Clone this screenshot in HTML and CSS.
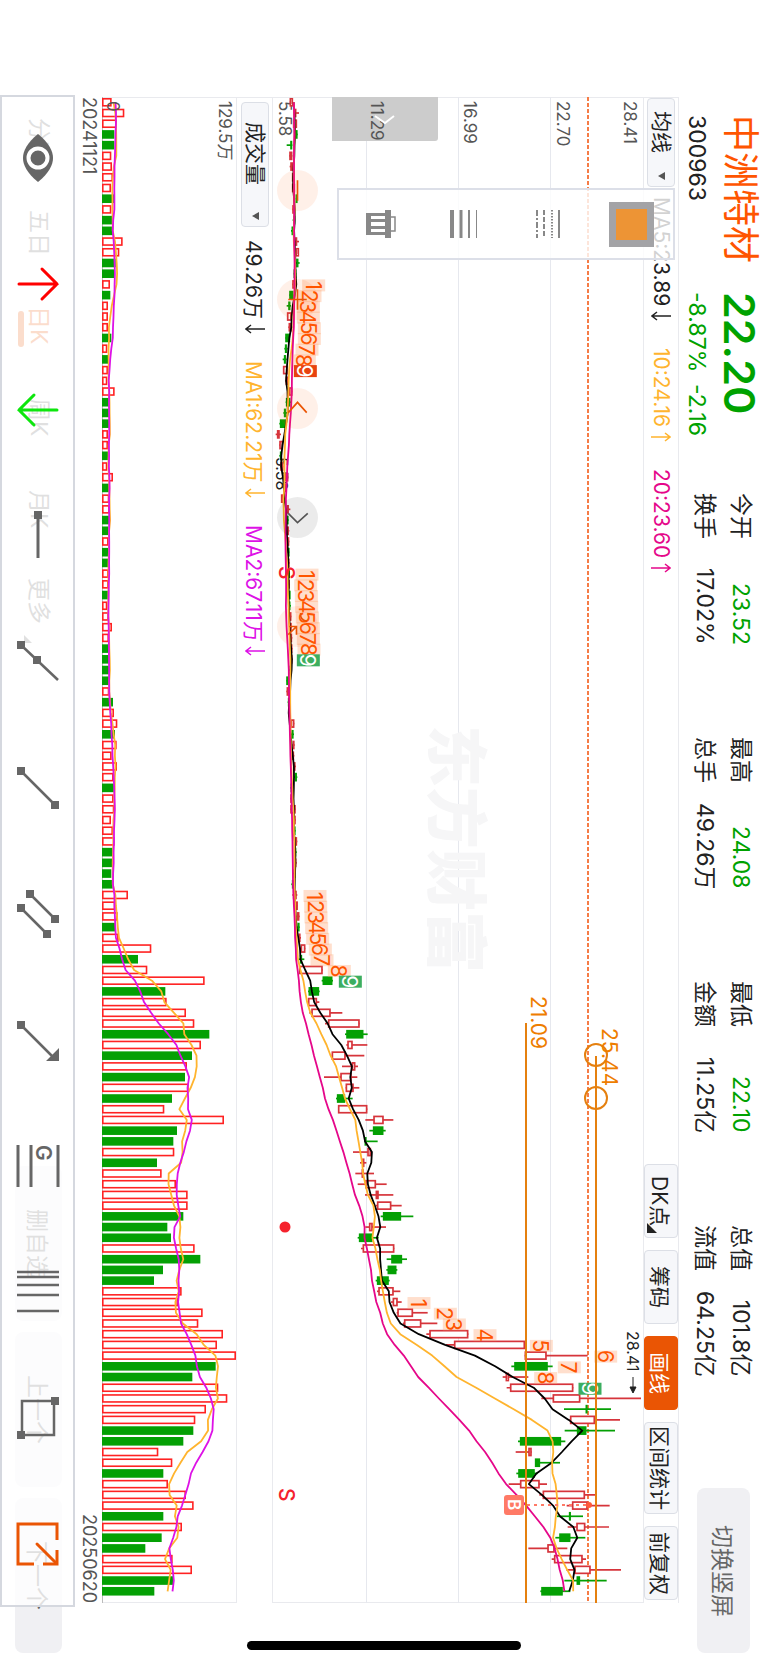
FILE: index.html
```html
<!DOCTYPE html>
<html lang="zh-CN">
<head>
  <meta charset="UTF-8">
  <meta name="viewport" content="width=device-width, initial-scale=1">
  <title>中洲特材 300963</title>
  <link rel="stylesheet" href="styles.css">
</head>
<body>
  <header class="header">
    <div class="quote">
      <h1 class="quote-name">中洲特材</h1>
      <strong class="quote-price">22.20</strong>
      <span class="quote-code">300963</span>
      <span class="quote-change"><span>-8.87%</span><span>-2.16</span></span>
    </div>
    <dl class="stats">
      <div><dt>今开</dt><dd class="down">23.52</dd></div>
      <div><dt>换手</dt><dd>17.02%</dd></div>
      <div><dt>最高</dt><dd class="down">24.08</dd></div>
      <div><dt>总手</dt><dd>49.26万</dd></div>
      <div><dt>最低</dt><dd class="down">22.10</dd></div>
      <div><dt>金额</dt><dd>11.25亿</dd></div>
      <div><dt>总值</dt><dd>101.8亿</dd></div>
      <div><dt>流值</dt><dd>64.25亿</dd></div>
    </dl>
    <button class="gray-btn switch-btn">切换竖屏</button>
  </header>

  <main class="main">
    <div class="bar bar-top">
      <div class="picker">
        <select aria-label="主图指标"><option>均线</option></select>
      </div>
      <div class="legend">
        <span>MA5:23.89<svg class="arr" viewBox="0 0 20 10"><path d="M20 5H1M6 1L1 5l5 4"/></svg></span>
        <span class="c-ma10">10:24.16<svg class="arr" viewBox="0 0 20 10"><path d="M0 5h19M14 1l5 4-5 4"/></svg></span>
        <span class="c-ma20">20:23.60<svg class="arr" viewBox="0 0 20 10"><path d="M0 5h19M14 1l5 4-5 4"/></svg></span>
      </div>
      <div class="actions">
        <button class="corner">DK点</button>
        <button>筹码</button>
        <button class="active">画线</button>
        <button class="wide">区间统计</button>
        <button>前复权</button>
      </div>
    </div>

    <section class="price" aria-label="日K">
      <svg class="chart" viewBox="0 0 372 1506">
        <path class="grid" d="M94.5 0V1506M186.5 0V1506M278.5 0V1506"/>
        <text class="watermark" transform="translate(161 628) rotate(90)">东方财富</text>
        <g class="axis">
          <text transform="translate(352 4) rotate(90)">28.41</text>
          <text transform="translate(285 4) rotate(90)">22.70</text>
          <text transform="translate(192 4) rotate(90)">16.99</text>
          <text transform="translate(7 4) rotate(90)">5.58</text>
        </g>
        <path class="fold" d="M60 0H166V41q0 3 -3 3H60z"/>
        <text class="axis" transform="translate(99 4) rotate(90)">11.29</text>
        <path class="fold-arrow" d="M103 19l10 7 9-7"/>
        <path class="last-price" d="M316 0V1506"/>
        <text class="mark" transform="translate(4 360) rotate(90)">5.58</text>
        <g id="candles"></g>
        <g id="price-lines"></g>
        <g id="counts"></g>
        <text class="mark" transform="translate(355 1234) rotate(90)">28.41</text>
        <path class="mark-arrow" d="M361 1280v15M358 1290l3 6 3-6z"/>

        <g class="signal">
          <text transform="translate(7 469) rotate(90)">S</text>
          <text transform="translate(7 1391) rotate(90)">S</text>
          <circle cx="13" cy="1130" r="5.5"/>
        </g>
        <path class="buy-line" d="M255 1408H316"/>
        <circle class="buy-dot" cx="317" cy="1408" r="3"/>
        <rect class="buy" x="232" y="1398" width="20" height="20" rx="3"/>
        <text class="buy-text" transform="translate(236 1402) rotate(90)">B</text>

        <g class="drawn">
          <path d="M254 926V1506M324 959V1506"/>
          <circle cx="324" cy="958" r="11"/>
          <circle cx="324" cy="1001" r="11"/>
          <text transform="translate(259 899) rotate(90)">21.09</text>
          <text transform="translate(330 931) rotate(90)">25.44</text>
        </g>
      </svg>
      <button class="round zoom-out" aria-label="缩小"><svg viewBox="0 0 40 40"><path d="M20 10v20"/></svg></button>
      <button class="round zoom-in" aria-label="放大"><svg viewBox="0 0 40 40"><path d="M20 10v20M11 20h18"/></svg></button>
      <button class="round prev" aria-label="左移"><svg viewBox="0 0 40 40"><path d="M11 24l9-10 9 10"/></svg></button>
      <button class="round next" aria-label="右移"><svg viewBox="0 0 40 40"><path d="M11 16l9 9 10-9"/></svg></button>
      <button class="round turn" aria-label="旋转"><svg viewBox="0 0 40 40"><path d="M12 20h7v8M19 20l-8 8M23 7q-1 6 6 8"/></svg></button>
    </section>

    <div class="bar bar-vol">
      <div class="picker picker-vol">
        <select aria-label="副图指标"><option>成交量</option></select>
      </div>
      <div class="legend legend-vol">
        <span>49.26万<svg class="arr" viewBox="0 0 20 10"><path d="M20 5H1M6 1L1 5l5 4"/></svg></span>
        <span class="c-ma10">MA1:62.21万<svg class="arr" viewBox="0 0 20 10"><path d="M20 5H1M6 1L1 5l5 4"/></svg></span>
        <span class="c-vol2">MA2:67.11万<svg class="arr" viewBox="0 0 20 10"><path d="M20 5H1M6 1L1 5l5 4"/></svg></span>
      </div>
    </div>

    <section class="volume" aria-label="成交量">
      <svg class="chart" viewBox="0 0 135 1506">
        <g id="bars"></g>
        <g id="volume-lines"></g>
        <text class="axis" transform="translate(117 4) rotate(90)">129.5万</text>
        <text class="axis" transform="translate(5 4) rotate(90)">0</text>
      </svg>
    </section>
    <div class="dates"><time>20241121</time><time>20250620</time></div>

    <div class="style-panel">
      <button class="swatch" aria-label="颜色"></button>
      <button aria-label="线型"><svg width="28" height="28" viewBox="0 0 28 28">
        <path d="M25 0v28" stroke-width="2"/><path d="M18 0v28" stroke-width="2" stroke-dasharray="1.500 1.500"/>
        <path d="M10 0v28" stroke-width="2" stroke-dasharray="5 2"/><path d="M3 0v28" stroke-width="2" stroke-dasharray="6 2 2 2"/>
      </svg></button>
      <button aria-label="线宽"><svg width="28" height="28" viewBox="0 0 28 28">
        <path d="M26.500 0v28" stroke-width="1"/><path d="M19 0v28" stroke-width="2"/>
        <path d="M11 0v28" stroke-width="3"/><path d="M2 0v28" stroke-width="4"/>
      </svg></button>
      <button aria-label="删除"><svg width="30" height="28" viewBox="0 0 30 28">
        <path fill="#888" stroke="none" fill-rule="evenodd" d="M0 3h19V0h6v28h-6v-3H0zM5 6v3h14V6zM5 12v4h14v-4zM5 19v3h14v-3z"/>
        <path d="M25 7h4v14h-4" stroke-width="1.500"/>
      </svg></button>
    </div>
  </main>

  <footer class="footer">
    <nav class="periods">
      <a href="#">分时</a><a href="#">五日</a><a href="#" class="on">日K</a><a href="#">周K</a><a href="#">月K</a><a href="#" class="more">更多</a>
    </nav>
    <div class="pager">
      <button class="gray-btn">删自选</button>
      <button class="gray-btn">上一个</button>
      <button class="gray-btn">下一个</button>
    </div>
    <div class="tools">
      <button aria-label="显示"><svg viewBox="0 0 42 48"><path fill="#666" stroke="none" d="M21 0C32 9 36 17 36 24S32 39 21 48C10 39 6 31 6 24S10 9 21 0z"/><circle cx="21" cy="24" r="9.500" fill="#666" stroke="#fff" stroke-width="4"/></svg></button>
      <button aria-label="向上箭头"><svg viewBox="0 0 42 42"><path stroke="#f00" stroke-linecap="round" d="M2 21h38M25 6l15 15-15 15"/></svg></button>
      <button aria-label="向下箭头"><svg viewBox="0 0 42 42"><path stroke="#0de60d" stroke-linecap="round" d="M40 21H2M17 6L2 21l15 15"/></svg></button>
      <button aria-label="射线"><svg viewBox="0 0 42 42"><path d="M21 0v43"/><path class="knob" d="M17-4h8v8h-8z"/></svg></button>
      <button aria-label="直线"><svg viewBox="0 0 42 42"><path stroke-width="2.500" d="M4 4l37 35"/><path class="knob" d="M0 0h8v8H0zM16 15h8v8h-8z"/></svg></button>
      <button aria-label="线段"><svg viewBox="0 0 42 42"><path stroke-width="2.500" d="M4 4l34 34"/><path class="knob" d="M0 0h8v8H0zM34 34h8v8h-8z"/></svg></button>
      <button aria-label="平行线"><svg viewBox="0 0 42 48"><path stroke-width="2.500" d="M13 4l25 25M4 18l26 26"/><path class="knob" d="M9 0h8v8H9zM34 25h8v8h-8zM0 14h8v8H0zM26 40h8v8h-8z"/></svg></button>
      <button aria-label="箭头线"><svg viewBox="0 0 42 42"><path stroke-width="2.500" d="M4 6l34 34"/><path class="knob" d="M0 2h8v8H0zM42 29v13H29z"/></svg></button>
      <button aria-label="黄金分割"><svg viewBox="0 0 42 42"><path d="M1 0v42M14 0v42M41 0v42"/><text transform="translate(19 0) rotate(90)">G</text></svg></button>
      <button aria-label="周期线"><svg viewBox="0 0 42 42"><path stroke-width="2.500" d="M0 1h42M0 6h42M0 14h42M0 24h42M0 40h42"/></svg></button>
      <button aria-label="矩形"><svg viewBox="0 0 42 42"><path stroke-width="2.500" d="M5 4h32v34H5z"/><path class="knob" d="M34 0h8v8h-8zM0 34h8v8H0z"/></svg></button>
      <button aria-label="退出画线"><svg viewBox="0 0 42 42"><path stroke="#ea5504" d="M40 17V1H1v40h16M26 41h14V27"/><path stroke="#ea5504" stroke-linecap="round" d="M20 21l19 19"/></svg></button>
    </div>
  </footer>
  <div class="home-bar"></div>
  <script src="chart.js"></script>
</body>
</html>
```

FILE: styles.css
```css
*, ::before, ::after {
  box-sizing: border-box;
}

/* landscape screen: inline axis runs down, rows stack right to left */
body {
  margin: 0;
  position: relative;
  writing-mode: vertical-rl;
  text-orientation: sideways;
  width: 100%;
  height: 100vh;
  display: flex;
  flex-direction: column;
  background: #fff;
  color: #222;
  font-family: Inter, "Noto Sans CJK SC", sans-serif;
  font-size: 21px;
}

button, select {
  font: inherit;
  color: inherit;
  writing-mode: inherit;
  text-orientation: inherit;
  margin: 0;
  padding: 0;
  border: 0;
  background: none;
  appearance: none;
}

a {
  color: inherit;
  text-decoration: none;
}

/* Header */
.header {
  flex: none;
  width: 89px;
  display: flex;
  padding: 115px 0 12px;
  font-size: 23px;
}
.quote {
  height: 378px;
  display: grid;
  grid-template-columns: 177px 1fr;
  grid-template-rows: 46px 38px;
  padding-right: 5px;
}
.quote-name {
  margin: 0;
  font-size: 37px;
  font-weight: 400;
  line-height: 46px;
  color: #ff5500;
}
.quote-price {
  font-size: 43px;
  font-weight: 600;
  line-height: 46px;
  color: #00a200;
}
.quote-code, .quote-change {
  line-height: 40px;
}
.quote-change {
  display: flex;
  gap: 12px;
  color: #00a200;
}
.stats {
  margin: 0;
  padding-right: 9px;
  display: grid;
  grid-auto-flow: column;
  grid-template-rows: 36px 36px;
  grid-auto-columns: 152px;
  column-gap: 92px;
}
.stats div {
  display: flex;
  justify-content: space-between;
  line-height: 36px;
}
.stats dd {
  margin: 0;
}
.down {
  color: #00a200;
}
.gray-btn {
  background: #f0f0f3;
  border-radius: 8px;
  color: #666;
  font-size: 23px;
}
.switch-btn {
  width: 53px;
  height: 165px;
  margin: auto 18px 0 0;
}

/* Charts */
.main {
  flex: 1;
  position: relative;
  display: flex;
  flex-direction: column;
  margin: 97px 0 62px;
}
.bar {
  flex: none;
  width: 35px;
  display: flex;
  align-items: center;
  border-top: 1px solid #e9eaee;
}
.bar-top {
  border-right: 1px solid #e9eaee;
}
.picker {
  position: relative;
  width: 28px;
  height: 89px;
  border: 1px solid #dcdfe6;
  border-radius: 4px;
  background: #f6f7fa;
}
.picker select {
  width: 100%;
  height: 100%;
  padding-top: 12px;
}
.picker::after {
  content: "";
  position: absolute;
  right: 9px;
  bottom: 6px;
  border: 4px solid transparent;
  border-right: 7px solid #555;
  border-left: 0;
}
.picker-vol {
  height: 125px;
  margin-top: 4px;
}
.picker-vol select {
  padding-top: 19px;
}
.legend {
  flex: none;
  display: flex;
  gap: 27px;
  margin-top: 10px;
}
.legend-vol {
  margin-top: 13px;
}
.legend span {
  flex: none;
  display: flex;
  align-items: center;
  gap: 5px;
}
.arr {
  flex: none;
  width: 20px;
  height: 10px;
  fill: none;
  stroke: currentColor;
  stroke-width: 1.5;
}
.c-ma10 { color: #ffb42e; }
.c-ma20 { color: #e5078a; }
.c-vol2 { color: #dd12e6; }

.actions {
  display: flex;
  align-self: stretch;
  gap: 12px;
  margin-top: auto;
  padding-bottom: 3px;
}
.actions button {
  position: relative;
  height: 74px;
  border: 1px solid #dcdfe6;
  border-radius: 4px;
  background: #f6f7fa;
}
.actions .wide {
  height: 92px;
}
.actions .active {
  background: #ea5504;
  border-color: #ea5504;
  color: #fff;
}
.actions .corner::after {
  content: "";
  position: absolute;
  left: 2px;
  bottom: 4px;
  border: 5px solid #222;
  border-top-color: transparent;
  border-right-color: transparent;
}

.price {
  flex: 1;
  position: relative;
  box-shadow: inset 0 0 0 1px #e9eaee;
}
.volume {
  flex: none;
  width: 135px;
  box-shadow: inset 1px 0 #bbb, inset 0 0 0 1px #e9eaee;
}
.chart {
  display: block;
  width: 100%;
  height: 100%;
  overflow: visible;
}
.chart text {
  writing-mode: horizontal-tb;
}
.grid { stroke: #e6e8ee; }
.axis {
  font-size: 17px;
  fill: #555;
}
.watermark {
  font-size: 62px;
  font-weight: 900;
  fill: #f6f6f7;
}
.fold { fill: #ccc; }
.fold-arrow {
  fill: none;
  stroke: #fff;
  stroke-width: 2;
}
.last-price {
  stroke: #f67c46;
  stroke-width: 2;
  stroke-dasharray: 4 2;
}
.mark {
  font-size: 16px;
  fill: #222;
}
.mark-arrow {
  fill: #222;
  stroke: #222;
}
.signal {
  fill: #f5222d;
  font-size: 21px;
  font-weight: 500;
}
.buy { fill: #ff7a66; }
.buy-dot { fill: #ff5a3c; }
.buy-line {
  stroke: #ff7a66;
  stroke-width: 2;
  stroke-dasharray: 3 4;
}
.buy-text {
  fill: #fff;
  font-size: 17px;
  font-weight: 600;
}
.drawn {
  fill: #ee7d00;
}
.drawn path, .drawn circle {
  fill: none;
  stroke: #e5800f;
  stroke-width: 2;
}
.up rect {
  fill: #fff;
  stroke: #d6343b;
}
.up line { stroke: #d6343b; }
.fall rect { fill: #04a004; stroke: #04a004; }
.fall line { stroke: #04a004; }
.candle { stroke-width: 1.7; }
.vol-up {
  fill: #fff;
  stroke: #ff2222;
  stroke-width: 1.6;
}
.vol-fall { fill: #04a004; }
.line {
  fill: none;
  stroke-width: 1.8;
  stroke-linejoin: round;
}
.ma5 { stroke: #000; }
.ma10 { stroke: #ffb42e; }
.ma20 { stroke: #e5078a; }
.vol10 { stroke: #dd12e6; }
.count rect { fill: rgba(255, 162, 112, 0.35); }
.count text {
  fill: #ff5500;
  font-size: 21px;
  text-anchor: middle;
}
.count.last text { fill: #fff; }
.count.last rect { fill: #3cae60; }
.count.low rect { fill: #e8420f; }

/* controls floating on the chart */
.round {
  position: absolute;
  left: 5px;
  width: 41px;
  height: 41px;
  border-radius: 50%;
  background: rgba(255, 85, 0, 0.09);
}
.round svg {
  display: block;
  fill: none;
  stroke: #ea5504;
  stroke-width: 1.6;
}
.zoom-out { top: 73px; }
.zoom-in { top: 182px; }
.prev { top: 291px; }
.next {
  top: 400px;
  background: rgba(0, 0, 0, 0.08);
}
.next svg { stroke: #555; }
.turn { top: 509px; }

.dates {
  flex: none;
  width: 25px;
  display: flex;
  justify-content: space-between;
  font-size: 18px;
  line-height: 26px;
  color: #555;
}

/* line colour, dash and width */
.style-panel {
  position: absolute;
  top: 91px;
  right: 4px;
  width: 338px;
  height: 72px;
  display: flex;
  flex-direction: column;
  align-items: center;
  border: 2px solid #dcdfe8;
  background: rgba(255, 255, 255, 0.8);
}
.style-panel button {
  flex: 1;
  display: flex;
  align-items: center;
  justify-content: center;
}
.style-panel svg {
  display: block;
  fill: none;
  stroke: #888;
}
.swatch::before {
  content: "";
  width: 45px;
  height: 45px;
  border: 7px solid rgba(150, 150, 154, 0.88);
  background: #ed9435;
  background-clip: padding-box;
}

/* Bottom bar */
.footer {
  flex: none;
  position: relative;
  width: 77px;
  display: flex;
  align-items: center;
  padding: 95px 0 12px;
  color: #666;
  font-size: 23px;
}
.periods {
  display: flex;
}
.periods a {
  position: relative;
  height: 92px;
  line-height: 49px;
  text-align: center;
}
.periods .on { color: #ea5504; }
.periods .on::after {
  content: "";
  position: absolute;
  left: 4px;
  top: 32px;
  width: 6px;
  height: 36px;
  border-radius: 3px;
  background: #ea5504;
}
.more::after {
  content: "";
  position: absolute;
  left: 10px;
  bottom: 4px;
  border: 4px solid #666;
  border-top-color: transparent;
  border-right-color: transparent;
}
.pager {
  display: flex;
  gap: 11px;
  margin-top: auto;
}
.pager button {
  width: 47px;
  height: 155px;
}
.tools {
  position: absolute;
  top: 95px;
  bottom: 58px;
  left: 0;
  right: 2px;
  display: flex;
  box-shadow: inset 0 0 0 2px #d5d8df;
  background: rgba(255, 255, 255, 0.8);
}
.tools button {
  flex: 1;
  display: flex;
  align-items: center;
  justify-content: center;
}
.tools svg {
  width: 42px;
  overflow: visible;
  fill: none;
  stroke: #666;
  stroke-width: 3;
}
.tools .knob {
  fill: #666;
  stroke: none;
}
.tools text {
  writing-mode: horizontal-tb;
  fill: #666;
  stroke: none;
  font-size: 21px;
  font-weight: 600;
}

.home-bar {
  position: absolute;
  left: 247px;
  bottom: 15px;
  width: 274px;
  height: 9px;
  border-radius: 5px;
  background: #000;
}
```

FILE: chart.js
```js
const NS = 'http://www.w3.org/2000/svg';
const STEP = 10.712;   // distance between two trading days
const rowY = i => 5.3 + STEP * i;
const priceX = v => v / 3 - 41;

// [up, low, body low, body high, high]
const candles = [
  [1,176,176,186,186],[1,190,190,196,204],[1,186,186,198,198],[0,194,194,197,200],[0,167,178,182,184],
  [1,175,175,184,184],[1,176,178,187,187],[1,183,183,190,190],[1,183,183,192,192],[0,194,194,197,200],
  [1,184,184,192,192],[0,185,187,190,192],[0,180,182,188,190],[1,190,193,197,204],[1,194,194,204,204],
  [0,194,196,202,206],[0,188,188,196,196],[1,184,184,194,194],[0,175,175,187,187],[0,167,172,178,180],
  [1,168,168,182,182],[1,172,173,182,184],[0,163,163,177,177],[0,160,162,165,170],[0,155,159,163,167],
  [1,156,156,170,170],[1,163,164,172,174],[1,172,174,184,184],[0,164,165,178,180],[0,157,159,163,170],
  [0,145,147,164,166],[1,134,138,146,150],[1,145,145,156,156],[0,145,147,151,153],[1,148,148,157,157],
  [1,160,162,172,172],[1,156,158,165,167],[1,150,150,158,158],[1,166,168,173,178],[0,166,167,169,173],
  [1,167,168,173,175],[1,168,169,174,175],[0,168,170,172,175],[1,169,170,175,176],[0,169,171,174,177],
  [1,169,171,176,177],[0,172,173,175,177],[0,172,172,178,180],[1,173,173,181,181],[1,175,176,182,183],
  [1,176,177,183,184],[1,176,178,184,185],[1,177,178,184,185],[0,175,176,180,182],[0,166,166,173,174],
  [1,166,167,176,176],[0,170,171,174,176],[1,171,172,177,178],[1,179,179,190,190],[0,180,182,186,189],
  [1,184,185,189,191],[1,182,183,189,190],[1,186,188,193,195],[0,190,192,195,199],[0,178,179,183,185],
  [1,177,178,185,185],[1,178,178,194,194],[1,186,187,194,194],[0,187,188,192,194],[1,190,191,198,199],
  [0,189,190,194,197],[1,189,190,196,197],[0,187,188,193,195],[0,181,183,186,188],[1,184,186,197,199],
  [1,194,195,199,200],[1,196,198,205,206],[0,199,200,203,206],[1,202,203,208,210],[1,204,209,223,223],
  [0,203,207,213,220],[1,204,204,275,275],[0,272,275,304,306],[0,231,233,264,266],[1,228,231,258,265],
  [1,235,241,299,334],[1,282,291,386,386],[0,342,346,397,410],[1,346,349,365,409],[1,302,302,344,400],
  [1,333,362,373,381],[1,279,328,362,379],[1,344,344,368,385],[0,315,318,342,365],[1,321,321,409,409],
  [1,403,427,458,487],[0,415,426,457,464],[0,400,401,404,440],[1,366,409,420,422],[1,387,394,400,406],
  [1,373,392,398,429],[1,380,403,435,467],[1,402,434,443,487],[1,434,438,481,512],[0,449,456,510,547],
  [1,403,414,425,465],[0,380,384,424,443],[1,390,395,490,490],[0,467,481,513,528],[0,466,470,496,499],
  [0,434,438,473,476],[1,438,442,488,508],[1,480,485,500,512],[1,497,499,546,590],[1,516,519,571,619],
  [1,586,595,712,712],[1,645,669,882,882],[1,881,881,947,1070],[0,841,850,950,965],[1,815,824,834,892],
  [1,827,837,1027,1027],[1,931,965,1048,1230],[0,999,1064,1067,1140],[1,1015,1017,1092,1167],[0,1001,1038,1066,1152],
  [0,861,867,990,1003],[1,854,892,902,902],[0,912,912,927,987],[0,856,862,911,920],[1,833,867,926,948],
  [1,925,935,1062,1095],[1,1007,1023,1070,1136],[0,978,1014,1017,1056],[1,1010,1036,1063,1134],[0,973,985,1018,1063],
  [1,892,949,971,1009],[1,962,969,1055,1065],[1,1006,1030,1079,1170],[0,1000,1037,1047,1127],[0,928,931,995,1018]
];

const volumes = [
  29,67,45,37,37,28,30,33,27,39,28,33,33,62,52,41,39,24,25,18,
  18,18,28,16,20,18,16,38,21,21,21,18,18,21,16,33,21,22,23,22,
  19,20,19,18,20,20,19,16,20,30,21,23,22,22,21,22,33,36,46,39,
  44,29,45,35,37,35,37,27,33,38,32,31,28,32,78,40,47,40,50,148,
  108,136,308,190,194,252,277,322,297,270,255,249,260,210,187,366,225,214,217,165,
  179,222,257,257,244,196,207,278,295,183,156,239,228,302,289,363,345,402,341,271,
  349,376,312,280,274,244,169,211,184,198,252,275,184,240,179,130,212,270,215,157
];

// days whose volume bar is green
const volumeDown = new Set([
  3, 4, 9, 11, 12, 15, 16, 18, 22, 24, 28, 29, 30, 33, 36, 39, 40, 42, 43, 46, 51, 52, 53, 54,
  56, 59, 64, 70, 71, 72, 73, 77, 80, 83, 87, 89, 91, 93, 96, 97, 99, 104, 105, 106,
  108, 109, 110, 118, 119, 124, 125, 128, 132, 134, 135, 138, 139
]);

// nine-turn counts: first day and the position of each digit
const counts = [
  { from: 17, end: 'low', at: [248, 237, 232, 232, 235, 235, 228, 220, 223] },
  { from: 44, end: '', at: [228, 224, 226, 227, 229, 232, 232, 234, 232] },
  { from: 74, end: '', at: [252, 254, 255, 257, 260, 268, 273, 325, 358] },
  { from: 112, end: '', at: [564, 643, 670, 762, 931, 1124, 1015, 944, 1077] }
];

function add(parent, name, attrs) {
  const node = document.createElementNS(NS, name);
  for (const key in attrs) node.setAttribute(key, attrs[key]);
  parent.appendChild(node);
  return node;
}

// moving average over n days, `before` holds the days left of the chart
function average(values, n, before) {
  const all = before.concat(values);
  return values.map((v, i) => {
    const end = i + before.length + 1;
    const part = all.slice(Math.max(0, end - n), end);
    return part.reduce((a, b) => a + b, 0) / part.length;
  });
}

function drawLine(id, cls, values, toX) {
  const points = values.map((v, i) => toX(v).toFixed(1) + ',' + rowY(i).toFixed(1)).join(' ');
  add(document.getElementById(id), 'polyline', { class: 'line ' + cls, points });
}

const candleGroup = document.getElementById('candles');
candles.forEach(([up, low, a, b, high], i) => {
  const g = add(candleGroup, 'g', { class: 'candle ' + (up ? 'up' : 'fall') });
  const y = rowY(i);
  add(g, 'line', { x1: priceX(low), x2: priceX(high), y1: y, y2: y });
  add(g, 'rect', { x: priceX(a) + 0.7, y: y - 3.5, width: Math.max((b - a) / 3 - 1.4, 0.4), height: 7 });
});

const closes = candles.map(c => c[0] ? c[3] : c[2]);
const closesBefore = Array(19).fill(189);
drawLine('price-lines', 'ma5', average(closes, 5, closesBefore), priceX);
drawLine('price-lines', 'ma10', average(closes, 10, closesBefore), priceX);
drawLine('price-lines', 'ma20', average(closes, 20, closesBefore), priceX);

counts.forEach(({ from, end, at }) => {
  at.forEach((v, k) => {
    const last = k === 8;
    const g = add(document.getElementById('counts'), 'g', { class: 'count' + (last ? ' last ' + end : '') });
    const x = priceX(v);
    const y = rowY(from + k) + 1;
    add(g, 'rect', { x: x - 11.5, y: y - 6, width: 23, height: 12 });
    add(g, 'text', { transform: `translate(${x - 8} ${y}) rotate(90)` }).textContent = k + 1;
  });
});

const barGroup = document.getElementById('bars');
volumes.forEach((v, i) => {
  const down = volumeDown.has(i);
  const edge = down ? 0 : 0.8;
  add(barGroup, 'rect', {
    class: down ? 'vol-fall' : 'vol-up',
    x: edge, y: rowY(i) - 4.3 + edge, width: v / 3 - edge * 2, height: 8.6 - edge * 2
  });
});
const volumesBefore = [50, 50, 47, 45, 40, 40, 35, 33, 35];
drawLine('volume-lines', 'ma10', average(volumes, 5, volumesBefore), v => v / 3);
drawLine('volume-lines', 'vol10', average(volumes, 10, volumesBefore), v => v / 3);
```
